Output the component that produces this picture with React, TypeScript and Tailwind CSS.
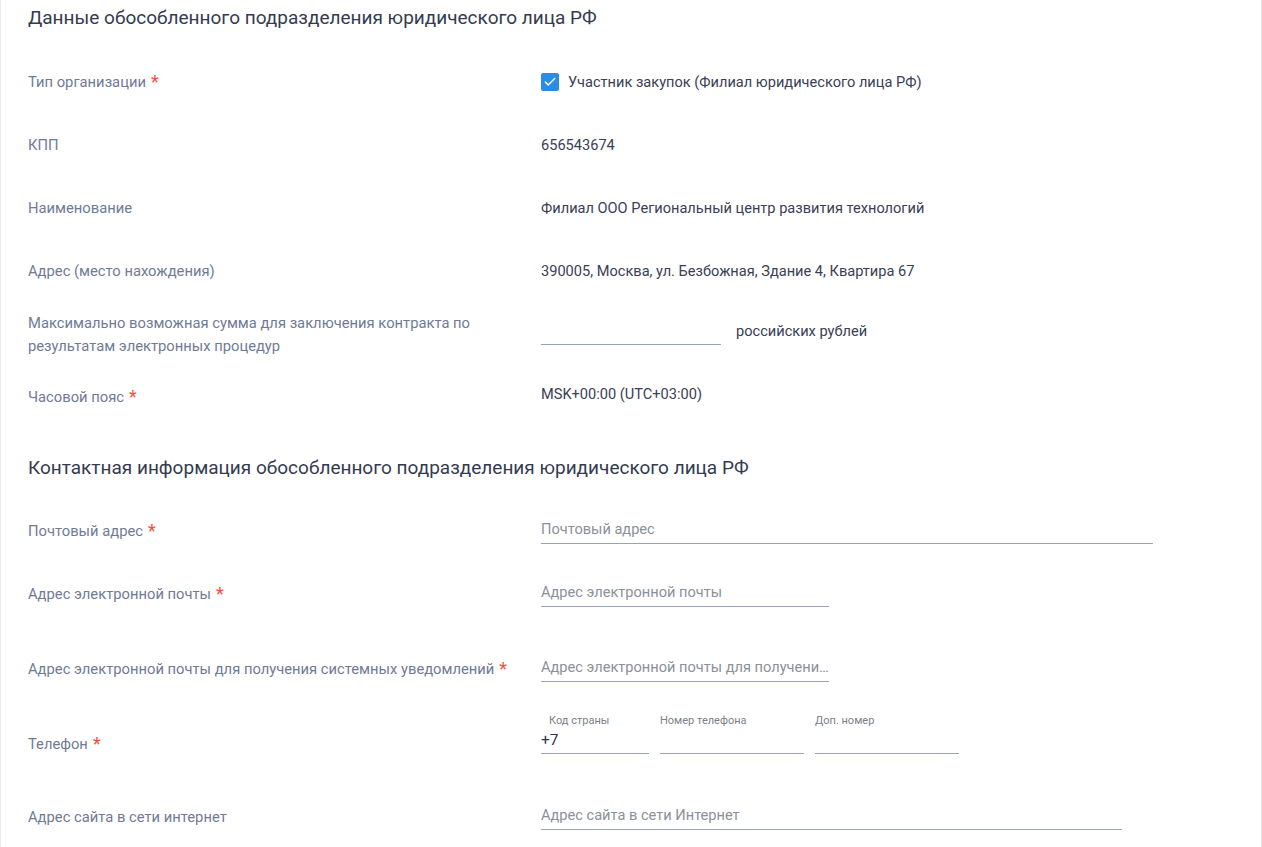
import { Check } from "lucide-react";

const Star = () => <span className="ml-[5px] text-[#f0503c] text-[18px] leading-none align-[-1px]">*</span>;

const Label = ({ text, required }: { text: string; required?: boolean }) => (
  <div className="w-[513px] shrink-0 text-[14.75px] leading-[23px] text-[#6f7b95]">
    {text}
    {required && <Star />}
  </div>
);

const Field = ({ placeholder, width }: { placeholder: string; width: string }) => (
  <div className={`${width} border-b border-[#97a2bb] pt-[2px] pb-[4px] text-[14.6px] leading-[20px] text-[#8b909a] truncate`}>
    {placeholder}
  </div>
);

const Row = ({ h, children }: { h: string; children: React.ReactNode }) => (
  <div className={`${h} flex items-center`}>{children}</div>
);

export default function App() {
  return (
    <div className="min-h-[847px] w-[1262px] bg-white border-x border-[#ececec] pl-[27px] font-['Roboto',sans-serif] text-[14.6px] text-[#3a4055]">
      <div className="h-[51px] pt-[6px]">
        <h2 className="text-[19px] leading-6 text-[#343b50]">Данные обособленного подразделения юридического лица РФ</h2>
      </div>

      <Row h="h-[63px]">
        <Label text="Тип организации" required />
        <div className="flex items-center gap-[9px]">
          <span className="w-[18px] h-[18px] rounded-[2px] bg-[#2c8be3] flex items-center justify-center">
            <Check size={14} strokeWidth={2.5} className="text-white" />
          </span>
          Участник закупок (Филиал юридического лица РФ)
        </div>
      </Row>

      <Row h="h-[63px]">
        <Label text="КПП" />
        <div>656543674</div>
      </Row>

      <Row h="h-[63px]">
        <Label text="Наименование" />
        <div>Филиал ООО Региональный центр развития технологий</div>
      </Row>

      <Row h="h-[63px]">
        <Label text="Адрес (место нахождения)" />
        <div>390005, Москва, ул. Безбожная, Здание 4, Квартира 67</div>
      </Row>

      <Row h="h-[63px]">
        <div className="w-[513px] shrink-0 text-[14.75px] leading-[23px] text-[#6f7b95]">
          Максимально возможная сумма для заключения контракта по
          <br />
          результатам электронных процедур
        </div>
        <div className="flex items-center gap-[15px]">
          <div className="w-[180px] h-[22px] -mt-[2px] border-b border-[#97a2bb]" />
          <span className="mt-[-6px]">российских рублей</span>
        </div>
      </Row>

      <Row h="h-[63px]">
        <Label text="Часовой пояс" required />
        <div className="-mt-[6px]">MSK+00:00 (UTC+03:00)</div>
      </Row>

      <div className="h-[71px] pt-[27px]">
        <h2 className="text-[19px] leading-6 text-[#343b50]">
          Контактная информация обособленного подразделения юридического лица РФ
        </h2>
      </div>

      <Row h="h-[63px]">
        <Label text="Почтовый адрес" required />
        <div className="mt-[-2px]">
          <Field placeholder="Почтовый адрес" width="w-[612px]" />
        </div>
      </Row>

      <Row h="h-[63px]">
        <Label text="Адрес электронной почты" required />
        <div className="mt-[-2px]">
          <Field placeholder="Адрес электронной почты" width="w-[288px]" />
        </div>
      </Row>

      <Row h="h-[86px]">
        <Label text="Адрес электронной почты для получения системных уведомлений" required />
        <div className="mt-[-2px]">
          <Field placeholder="Адрес электронной почты для получения системных уведомлений" width="w-[288px]" />
        </div>
      </Row>

      <Row h="h-[64px]">
        <Label text="Телефон" required />
        <div className="flex gap-[11px] -mt-[20px]">
          <div className="w-[108px]">
            <div className="pl-[8px] text-[11px] leading-[14px] text-[#7b7f88]">Код страны</div>
            <div className="border-b border-[#97a2bb] h-[26px] pt-[2px] text-[15.5px] leading-[20px] text-[#2f3649]">+7</div>
          </div>
          <div className="w-[144px]">
            <div className="text-[11px] leading-[14px] text-[#7b7f88]">Номер телефона</div>
            <div className="border-b border-[#97a2bb] h-[26px]" />
          </div>
          <div className="w-[144px]">
            <div className="text-[11px] leading-[14px] text-[#7b7f88]">Доп. номер</div>
            <div className="border-b border-[#97a2bb] h-[26px]" />
          </div>
        </div>
      </Row>

      <Row h="h-[83px]">
        <Label text="Адрес сайта в сети интернет" />
        <div className="mt-[-2px]">
          <Field placeholder="Адрес сайта в сети Интернет" width="w-[581px]" />
        </div>
      </Row>
    </div>
  );
}
